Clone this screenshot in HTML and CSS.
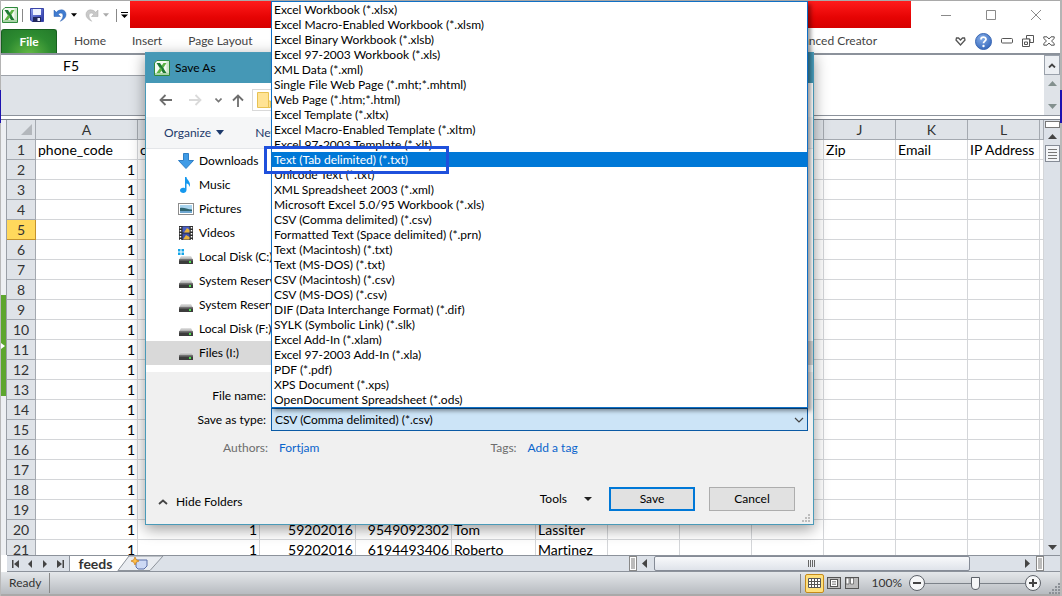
FILE: index.html
```html
<!DOCTYPE html>
<html lang="en">
<head>
<meta charset="utf-8">
<title>feeds - Save As</title>
<link rel="stylesheet" href="styles.css">
</head>
<body>
<svg width="0" height="0" class="defs" aria-hidden="true">
  <defs>
    <linearGradient id="drv" x1="0" y1="0" x2="0" y2="1"><stop offset="0" stop-color="#e6e6e6"/><stop offset="1" stop-color="#9a9a9a"/></linearGradient>
    <linearGradient id="dsk" x1="0" y1="0" x2="1" y2="1"><stop offset="0" stop-color="#8ea0f0"/><stop offset="1" stop-color="#2330a0"/></linearGradient>
    <radialGradient id="hlp" cx=".4" cy=".3" r=".8"><stop offset="0" stop-color="#86aee8"/><stop offset="1" stop-color="#2f62b8"/></radialGradient>
  </defs>
  <symbol id="excel" viewBox="0 0 16 16">
    <path d="M3 .5H15.500V15.500H.5V3Z" fill="#f4faf2" stroke="#2f8a3c"/>
    <path d="M12.500 1H15V15H12.500Z" fill="#cfe5cc"/><path d="M1 13H15V15H1Z" fill="#a9d4a6"/>
    <path d="M2.500 3H6L12.500 13H9Z" fill="#1f7a33"/><path d="M9.500 3H12.500L6 13H2.500Z" fill="#5db345"/><path d="M6 6.500 7.500 5.500 10 9.300 9 11Z" fill="#1f7a33"/>
  </symbol>
  <symbol id="drive" viewBox="0 0 16 14">
    <path d="M3 5H13L15 9H1Z" fill="url(#drv)"/><rect x="1" y="8.500" width="14" height="4.500" fill="#3c3c3c"/><rect x="1" y="8.500" width="14" height="1" fill="#777"/><rect x="11" y="10" width="2" height="2" fill="#4ee04e"/>
  </symbol>
  <symbol id="tri" viewBox="0 0 7 4"><path d="M0 0H7L3.500 4Z"/></symbol>
</svg>

<div class="app">
  <header class="titlebar">
    <div class="quick">
      <svg class="i16"><use href="#excel"/></svg>
      <span class="vsep"></span>
      <svg class="i14 disk" viewBox="0 0 14 14"><path d="M.5.5H13.500V13.500H2L.5 12Z" fill="url(#dsk)" stroke="#3a45a8"/><rect x="3" y="1" width="8" height="6" fill="#eef2ff"/><rect x="3" y="9" width="8" height="5" fill="#20265c"/><rect x="7.500" y="10" width="2.500" height="3" fill="#e8ecff"/></svg>
      <svg class="i14 undo" viewBox="0 0 14 14"><path d="M1 2V8.500H7.500L5.200 6.300C7.500 3.900 10.300 5.300 10 8 9.900 9.800 8.800 11.500 7.300 13.300 11 11.500 13 9.300 13 6.500 12.900 1.300 7 .3 3.300 4.300Z" fill="#3f7bd0" stroke="#2b5fae" stroke-width=".5"/></svg>
      <svg class="tri"><use href="#tri"/></svg>
      <svg class="i14 redo" viewBox="0 0 14 14"><path d="M13 2V8.500H6.500L8.800 6.300C6.500 3.900 3.700 5.300 4 8 4.100 9.800 5.200 11.500 6.700 13.300 3 11.500 1 9.300 1 6.500 1.100 1.300 7 .3 10.700 4.300Z" fill="#c9c9c9" stroke="#aaa" stroke-width=".5"/></svg>
      <svg class="tri pale"><use href="#tri"/></svg>
      <span class="vsep"></span>
      <svg class="custom" viewBox="0 0 7 6"><path d="M0 0H7V1H0ZM0 2.500H7L3.500 6Z"/></svg>
    </div>
    <div class="redact"></div>
    <div class="winbtns">
      <svg viewBox="0 0 12 12"><path d="M1 6.500H11"/></svg>
      <svg viewBox="0 0 12 12"><path d="M1.500 1.500H10.500V10.500H1.500Z"/></svg>
      <svg viewBox="0 0 12 12"><path d="M1 1 11 11M11 1 1 11"/></svg>
    </div>
  </header>

  <nav class="ribbon">
    <button class="file">File</button>
    <button class="tab">Home</button>
    <button class="tab">Insert</button>
    <button class="tab">Page Layout</button>
    <button class="tab addin">Advanced Creator</button>
    <div class="tools">
      <svg width="11" height="9" viewBox="0 0 11 9"><path d="M1.500 1H3.500L5.500 3 7.500 1H9.500L10 3 5.500 8 1 3Z" fill="#fff" stroke="#555" stroke-width="1.300"/></svg>
      <svg width="17" height="17" viewBox="0 0 17 17"><circle cx="8.500" cy="8.500" r="8" fill="url(#hlp)" stroke="#3c69b4"/><path d="M6 6.500C6 3.500 11 3.500 11 6.300 11 8 8.500 8.300 8.500 10.300" fill="none" stroke="#fff" stroke-width="1.800"/><circle cx="8.500" cy="13" r="1.200" fill="#fff"/></svg>
      <svg width="12" height="6" viewBox="0 0 12 6"><rect x=".5" y=".5" width="11" height="4.500" rx="1" fill="#fff" stroke="#555"/></svg>
      <svg width="12" height="12" viewBox="0 0 12 12"><path d="M4.500.5H11.500V7.500H8V4H4.500Z" fill="#fff" stroke="#555"/><path d="M.5 4H7.500V11.500H.5ZM2.500 7H5.500V9.500H2.500Z" fill="#fff" stroke="#555"/></svg>
      <svg width="12" height="10" viewBox="0 0 12 10"><path d="M.8.800H4L6 3 8 .8H11.200V2.500L8.500 5 11.200 7.500V9.200H8L6 7 4 9.200H.8V7.500L3.500 5 .8 2.500Z" fill="#fff" stroke="#555"/></svg>
    </div>
  </nav>

  <section class="formula">
    <div class="namecol"><input class="namebox" aria-label="Name box" value="F5"></div>
    <textarea class="fx" aria-label="Formula bar"></textarea>
    <div class="fxscroll">
      <button aria-label="Collapse formula bar"><svg width="8" height="5" viewBox="0 0 8 5"><path d="M1 4.500 4 1.500 7 4.500" fill="none" stroke="#444" stroke-width="1.800"/></svg></button>
      <svg width="9" height="5" viewBox="0 0 9 5"><path d="M0 5 4.500 0 9 5Z" fill="#83908e"/></svg>
      <svg width="9" height="5" viewBox="0 0 9 5"><path d="M0 0H9L4.500 5Z" fill="#83908e"/></svg>
    </div>
  </section>

  <main class="work">
    <div class="gutter"><div class="handle"><svg width="4" height="6" viewBox="0 0 4 6"><path d="M0 0 4 3 0 6Z" fill="#fff"/></svg></div></div>
    <div class="sheet">
      <table>
        <colgroup><col class="c-h"><col class="c-a"><col class="c-b"><col class="c-c"><col class="c-c"><col class="c-e"><col class="c-n"><col class="c-n"><col class="c-n"><col class="c-n"><col class="c-n"><col class="c-n"><col class="c-n"><col></colgroup>
        <thead><tr><th class="corner"><svg width="11" height="11" viewBox="0 0 11 11"><path d="M11 0V11H0Z" fill="#b3b7bc"/></svg></th><th>A<th>B<th>C<th>D<th>E<th>F<th>G<th>H<th>I<th>J<th>K<th>L<th></tr></thead>
        <tbody>
        <tr><th>1<td class="t">phone_code<td class="t">country<td><td><td><td><td><td><td><td class="t">Zip<td class="t">Email<td class="t">IP Address<td>
        <tr><th>2<td>1<td><td><td><td><td><td><td><td><td><td><td><td>
        <tr><th>3<td>1<td><td><td><td><td><td><td><td><td><td><td><td>
        <tr><th>4<td>1<td><td><td><td><td><td><td><td><td><td><td><td>
        <tr><th class="on">5<td>1<td><td><td><td><td><td><td><td><td><td><td><td>
        <tr><th>6<td>1<td><td><td><td><td><td><td><td><td><td><td><td>
        <tr><th>7<td>1<td><td><td><td><td><td><td><td><td><td><td><td>
        <tr><th>8<td>1<td><td><td><td><td><td><td><td><td><td><td><td>
        <tr><th>9<td>1<td><td><td><td><td><td><td><td><td><td><td><td>
        <tr><th>10<td>1<td><td><td><td><td><td><td><td><td><td><td><td>
        <tr><th>11<td>1<td><td><td><td><td><td><td><td><td><td><td><td>
        <tr><th>12<td>1<td><td><td><td><td><td><td><td><td><td><td><td>
        <tr><th>13<td>1<td><td><td><td><td><td><td><td><td><td><td><td>
        <tr><th>14<td>1<td><td><td><td><td><td><td><td><td><td><td><td>
        <tr><th>15<td>1<td><td><td><td><td><td><td><td><td><td><td><td>
        <tr><th>16<td>1<td><td><td><td><td><td><td><td><td><td><td><td>
        <tr><th>17<td>1<td><td><td><td><td><td><td><td><td><td><td><td>
        <tr><th>18<td>1<td><td><td><td><td><td><td><td><td><td><td><td>
        <tr><th>19<td>1<td><td><td><td><td><td><td><td><td><td><td><td>
        <tr><th>20<td>1<td>1<td>59202016<td>9549092302<td class="t">Tom<td class="t">Lassiter<td><td><td><td><td><td><td>
        <tr><th>21<td>1<td>1<td>59202016<td>6194493406<td class="t">Roberto<td class="t">Martinez<td><td><td><td><td><td><td>
        </tbody>
      </table>
    </div>
    <div class="vscroll">
      <div class="split"></div>
      <svg width="9" height="5" viewBox="0 0 9 5"><path d="M0 5 4.500 0 9 5Z" fill="#444"/></svg>
      <div class="thumb"><svg width="9" height="10" viewBox="0 0 9 10"><path d="M0 .5H9M0 3.500H9M0 6.500H9M0 9.500H9" stroke="#777"/></svg></div>
      <svg class="down" width="9" height="5" viewBox="0 0 9 5"><path d="M0 0H9L4.500 5Z" fill="#444"/></svg>
    </div>
  </main>

  <div class="tabbar">
    <div class="tabnav">
      <svg width="7" height="8" viewBox="0 0 7 8"><path d="M0 0H1.500V8H0ZM7 0V8L2 4Z"/></svg>
      <svg width="7" height="8" viewBox="0 0 7 8"><path d="M5 0V8L1 4Z"/></svg>
      <svg width="7" height="8" viewBox="0 0 7 8"><path d="M1 0V8L5 4Z"/></svg>
      <svg width="7" height="8" viewBox="0 0 7 8"><path d="M0 0V8L5 4ZM5.500 0H7V8H5.500Z"/></svg>
    </div>
    <button class="sheettab">feeds</button>
    <svg class="newtab" width="48" height="15" viewBox="0 0 48 15">
      <path d="M0 0H12L1 14.500H0Z" fill="#fff"/><path d="M12 0 1 14.500H33L46 0Z" fill="#e9ecf1" stroke="#8d939b"/>
      <path d="M19 4H30V10L27 13H21L19 11Z" fill="#cdd9f5" stroke="#5b6fa8"/>
      <path d="M18 1 19.200 3.800 22 5 19.200 6.200 18 9 16.800 6.200 14 5 16.800 3.800Z" fill="#ffc04a" stroke="#c77a12" stroke-width=".7"/>
    </svg>
    <span class="grow"></span>
    <div class="hscroll">
      <div class="hsplit"></div>
      <svg width="5" height="9" viewBox="0 0 5 9"><path d="M5 0V9L0 4.500Z" fill="#444"/></svg>
      <div class="hthumb"><svg width="8" height="7" viewBox="0 0 8 7"><path d="M.5 0V7M2.500 0V7M4.500 0V7M6.500 0V7" stroke="#666"/></svg></div>
      <svg class="right" width="5" height="9" viewBox="0 0 5 9"><path d="M0 0V9L5 4.500Z" fill="#444"/></svg>
      <div class="hsplit"></div>
    </div>
  </div>

  <footer class="status">
    <span class="ready">Ready</span>
    <span class="grow"></span>
    <div class="views">
      <button class="view sel" aria-label="Normal"><svg width="13" height="10" viewBox="0 0 13 10"><rect width="13" height="10" fill="#fff"/><path d="M.5.500H12.500V9.500H.5ZM.5 3.500H12.500M.5 6.500H12.500M3.500.5V9.500M6.500.5V9.500M9.500.5V9.500" fill="none" stroke="#555"/></svg></button>
      <button class="view" aria-label="Page layout"><svg width="14" height="12" viewBox="0 0 14 12"><rect x=".5" y=".5" width="13" height="11" fill="#bbb" stroke="#555"/><rect x="3.500" y="2.500" width="7" height="7" fill="#fff" stroke="#555"/><path d="M5 4.500H9M5 6H9M5 7.500H9" stroke="#777" stroke-width=".7"/></svg></button>
      <button class="view" aria-label="Page break"><svg width="14" height="12" viewBox="0 0 14 12"><rect x=".5" y=".5" width="13" height="11" fill="#bbb" stroke="#555"/><path d="M1 1H4V7H1ZM5.500 1H8.500V7H5.500Z" fill="#fff" stroke="#555" stroke-width=".7"/></svg></button>
    </div>
    <label class="pct" for="zoom">100%</label>
    <button class="round" aria-label="Zoom out"><svg width="16" height="16" viewBox="0 0 16 16"><circle cx="8" cy="8" r="7.500" fill="#f6f7f8" stroke="#5c6168"/><path d="M4 8H12" stroke="#444" stroke-width="2"/></svg></button>
    <input id="zoom" class="zoom" type="range" min="0" max="100" value="50">
    <button class="round" aria-label="Zoom in"><svg width="16" height="16" viewBox="0 0 16 16"><circle cx="8" cy="8" r="7.500" fill="#f6f7f8" stroke="#5c6168"/><path d="M4 8H12M8 4V12" stroke="#444" stroke-width="2"/></svg></button>
    <svg class="grip" width="11" height="11" viewBox="0 0 11 11"><path d="M9 0h2v2H9zM6 3h2v2H6zM9 3h2v2H9zM3 6h2v2H3zM6 6h2v2H6zM9 6h2v2H9zM0 9h2v2H0zM3 9h2v2H3zM6 9h2v2H6zM9 9h2v2H9z" fill="#8c9197"/></svg>
  </footer>
</div>

<div class="dialog" role="dialog" aria-labelledby="dlg">
  <div class="dtitle"><svg class="i16"><use href="#excel"/></svg><span id="dlg">Save As</span></div>
  <div class="dnav">
    <svg width="13" height="12" viewBox="0 0 13 12"><path d="M13 6H2M6.500 1 1.500 6 6.500 11" fill="none" stroke="#6e6e6e" stroke-width="1.800"/></svg>
    <svg width="13" height="12" viewBox="0 0 13 12"><path d="M0 6H11M6.500 1 11.500 6 6.500 11" fill="none" stroke="#dadada" stroke-width="1.800"/></svg>
    <svg width="7" height="5" viewBox="0 0 7 5"><path d="M.5.500 3.500 3.500 6.500.5" fill="none" stroke="#777" stroke-width="1.600"/></svg>
    <svg width="12" height="13" viewBox="0 0 12 13"><path d="M6 13V2M1 6.500 6 1.500 11 6.500" fill="none" stroke="#6e6e6e" stroke-width="1.800"/></svg>
    <div class="address"><svg width="14" height="16" viewBox="0 0 14 16"><path d="M.5.500H11.500V9H13.500V15.500H.5Z" fill="#ffe394" stroke="#e8c252"/><path d="M11.500 9V15.500" stroke="#e8c252"/></svg></div>
  </div>
  <div class="dtools"><button class="organize">Organize <svg width="8" height="5" viewBox="0 0 8 5"><path d="M0 0H8L4 5Z" fill="#1d3a6b"/></svg></button><button>New folder</button></div>
  <div class="places">
    <ul>
      <li><svg viewBox="0 0 16 16"><path d="M5.500.5H10.500V7.500H15.500L8 15.500.5 7.500H5.500Z" fill="#3f9be6" stroke="#2f7fc6"/></svg>Downloads</li>
      <li><svg viewBox="0 0 16 16"><path d="M7 0H8.500C8.500 3 13.500 4.500 11.500 10 11 7.500 10 6.500 8.500 6.500V13C8.500 17 2 16.500 2 13.500 2 11 5 10.300 7 11.300Z" fill="#1598ee"/></svg>Music</li>
      <li><svg viewBox="0 0 16 16"><rect x=".5" y="2.500" width="15" height="11" fill="#fff" stroke="#8c8c8c"/><rect x="2" y="4" width="12" height="8" fill="#a9d4ef"/><path d="M2 7C6 6 9 8.500 14 8.500V12H2Z" fill="#2f6470"/><path d="M2 10H14V12H2Z" fill="#6ea6cf"/></svg>Pictures</li>
      <li><svg viewBox="0 0 16 16"><rect x="1" y="1" width="14" height="14" fill="#2d2d2d"/><path d="M4.500 1.500H11.500V7.500H4.500Z" fill="#4a5fc4"/><path d="M4.500 8.500H11.500V14.500H4.500Z" fill="#3b4fae"/><path d="M6 7.500 9 3 11.500 5V7.500ZM5 14.500 8 10 11.500 12V14.500Z" fill="#e8b33a"/><path d="M2.500 2V15M13.500 2V15" stroke="#fff" stroke-width="1.500" stroke-dasharray="1.500 1.500"/></svg>Videos</li>
      <li><svg viewBox="0 0 16 16"><path d="M0 0H2.500V2.500H0ZM3.500 0H6V2.500H3.500ZM0 3.500H2.500V6H0ZM3.500 3.500H6V6H3.500Z" fill="#15a5e8"/><use href="#drive" y="2" width="16" height="14"/></svg>Local Disk (C:)</li>
      <li><svg viewBox="0 0 16 16"><use href="#drive" y="2" width="16" height="14"/></svg>System Reserved</li>
      <li><svg viewBox="0 0 16 16"><use href="#drive" y="2" width="16" height="14"/></svg>System Reserved</li>
      <li><svg viewBox="0 0 16 16"><use href="#drive" y="2" width="16" height="14"/></svg>Local Disk (F:)</li>
      <li class="cur"><svg viewBox="0 0 16 16"><use href="#drive" y="2" width="16" height="14"/></svg>Files (I:)</li>
    </ul>
  </div>
  <form class="dform">
    <div class="fields">
      <label for="fname">File name:</label>
      <input id="fname">
      <label for="ftype">Save as type:</label>
      <div class="combo">
        <select id="ftype"><option>CSV (Comma delimited) (*.csv)</option></select>
        <svg class="chev" width="10" height="6" viewBox="0 0 10 6"><path d="M1 1 5 5 9 1" fill="none" stroke="#444" stroke-width="1.200"/></svg>
        <ul class="list" role="listbox" aria-label="File types">
          <li>Excel Workbook (*.xlsx)</li>
          <li>Excel Macro-Enabled Workbook (*.xlsm)</li>
          <li>Excel Binary Workbook (*.xlsb)</li>
          <li>Excel 97-2003 Workbook (*.xls)</li>
          <li>XML Data (*.xml)</li>
          <li>Single File Web Page (*.mht;*.mhtml)</li>
          <li>Web Page (*.htm;*.html)</li>
          <li>Excel Template (*.xltx)</li>
          <li>Excel Macro-Enabled Template (*.xltm)</li>
          <li>Excel 97-2003 Template (*.xlt)</li>
          <li class="sel">Text (Tab delimited) (*.txt)<span class="mark"></span></li>
          <li>Unicode Text (*.txt)</li>
          <li>XML Spreadsheet 2003 (*.xml)</li>
          <li>Microsoft Excel 5.0/95 Workbook (*.xls)</li>
          <li>CSV (Comma delimited) (*.csv)</li>
          <li>Formatted Text (Space delimited) (*.prn)</li>
          <li>Text (Macintosh) (*.txt)</li>
          <li>Text (MS-DOS) (*.txt)</li>
          <li>CSV (Macintosh) (*.csv)</li>
          <li>CSV (MS-DOS) (*.csv)</li>
          <li>DIF (Data Interchange Format) (*.dif)</li>
          <li>SYLK (Symbolic Link) (*.slk)</li>
          <li>Excel Add-In (*.xlam)</li>
          <li>Excel 97-2003 Add-In (*.xla)</li>
          <li>PDF (*.pdf)</li>
          <li>XPS Document (*.xps)</li>
          <li>OpenDocument Spreadsheet (*.ods)</li>
        </ul>
      </div>
    </div>
    <div class="meta"><span class="mlabel authors">Authors:</span><a href="#">Fortjam</a><span class="mlabel tags">Tags:</span><a href="#">Add a tag</a></div>
    <div class="actions">
      <button type="button" class="plain hide"><svg width="10" height="6" viewBox="0 0 10 6"><path d="M1 5 5 1.500 9 5" fill="none" stroke="#444" stroke-width="1.800"/></svg>Hide Folders</button>
      <span class="grow"></span>
      <button type="button" class="plain toolsbtn">Tools<svg width="8" height="4" viewBox="0 0 8 4"><path d="M0 0H8L4 4Z" fill="#222"/></svg></button>
      <button type="button" class="btn primary">Save</button>
      <button type="button" class="btn">Cancel</button>
    </div>
    <svg class="dgrip" width="8" height="8" viewBox="0 0 8 8"><path d="M6 0h2v2H6zM3 3h2v2H3zM6 3h2v2H6zM0 6h2v2H0zM3 6h2v2H3zM6 6h2v2H6z" fill="#bdbdbd"/></svg>
  </form>
</div>
</body>
</html>
```
FILE: styles.css
```css
* { box-sizing: border-box; }
html, body { height: 100%; }
body {
  margin: 0;
  position: relative;
  overflow: hidden;
  background: linear-gradient(#b4b4b4 90px, #1d12b0 90px, #1d12b0 123px, #b9b9b9 123px);
  font: 12px/16px Lato, "Noto Sans", sans-serif;
  font-variant-ligatures: none;
  color: #000;
}
button, input, select, textarea { font: inherit; font-variant-ligatures: none; color: inherit; border: 0; padding: 0; margin: 0; background: none; border-radius: 0; }
ul { list-style: none; margin: 0; padding: 0; }
svg { display: block; flex: none; }
.defs { position: absolute; }
.grow { flex: 1; }
.i16 { width: 16px; height: 16px; }
.i14 { width: 14px; height: 14px; }

.app {
  display: flex;
  flex-direction: column;
  height: 100%;
  border: solid #a9a9a9;
  border-width: 1px 0 2px;
  margin: 0 2px 0 1px;
  background: #fff;
}

.titlebar { display: flex; height: 28px; flex: none; align-items: stretch; }
.quick { display: flex; align-items: center; width: 129px; padding-left: 1px; }
.vsep { width: 1px; height: 13px; margin-left: 4px; background: #888; }
.disk { margin-left: 7px; }
.undo { margin-left: 9px; }
.tri { width: 6px; height: 4px; margin-left: 4px; }
.redo { margin-left: 8px; }
.pale { fill: #aaa; }
.quick .pale + .vsep { margin-left: 7px; }
.custom { width: 7px; height: 6px; margin-left: 4px; }
.redact { flex: 1; margin-bottom: 1px; background: linear-gradient(#ff1c1c, #e60404 60%, #d60000); }
.winbtns { display: flex; align-items: center; gap: 33px; width: 149px; padding-left: 29px; }
.winbtns svg { width: 12px; height: 12px; fill: none; stroke: #8a8a8a; }

.ribbon { display: flex; height: 26px; flex: none; border-bottom: 2px solid #8c929b; color: #444; }
.file {
  width: 56px;
  color: #fff;
  font-weight: bold;
  border: 1px solid #17601f;
  border-bottom: 0;
  border-radius: 3px 3px 0 0;
  background: radial-gradient(ellipse at 50% 110%, #66bb46, #2c8a30 60%, #237a2a);
}
.tab { margin-left: 26px; }
.file + .tab { margin-left: 17px; }
.addin { margin-left: auto; margin-right: 78px; }
.tools { display: flex; align-items: center; gap: 9px; padding-right: 5px; }

.formula { display: flex; height: 61px; flex: none; border-bottom: 1px solid #8c929b; background: #dfe3e8; }
.namecol { width: 252px; }
.namebox { display: block; width: 100%; height: 21px; padding: 0 112px 0 0; text-align: center; background: #fff; font-size: 14px; border-bottom: 1px solid #9ea3aa; }
.fx { flex: 1; resize: none; background: #fff; }
.fxscroll { width: 16px; display: flex; flex-direction: column; align-items: center; }
.fxscroll button { width: 16px; height: 20px; border: 1px solid #9aa1ab; background: #eceff3; display: grid; place-items: center; margin-bottom: 6px; }
.fxscroll svg + svg { margin-top: 18px; }

.work { display: flex; flex: 1; min-height: 0; margin-top: 3px; border-top: 1px solid #7d838d; }
.gutter { width: 6px; border-right: 1px solid #9a9fa6; background: #eef0f3; padding-top: 175px; }
.handle { height: 101px; background: #5da62e; display: flex; align-items: center; }
.sheet { flex: 1; min-width: 0; overflow: hidden; }
table { width: 100%; table-layout: fixed; border-collapse: separate; border-spacing: 0; font-size: 14px; line-height: 19px; }
.c-h { width: 29px; } .c-a { width: 102px; } .c-b { width: 122px; } .c-c { width: 96px; } .c-e { width: 84px; } .c-n { width: 72px; }
th, td { height: 20px; padding: 0 2px; border: solid #d4d6d9; border-width: 0 1px 1px 0; white-space: nowrap; text-align: right; }
th { background: #dfe3e8; border-color: #a4a9b0; font-weight: normal; text-align: center; color: #333; padding: 0; }
td.t { text-align: left; }
.corner svg { margin-left: 14px; }
th.on { background: #ffd85c; border-color: #c4922c; }

.vscroll { width: 16px; display: flex; flex-direction: column; align-items: center; background: #dce1e8; padding: 1px 0 5px; }
.split { width: 15px; height: 7px; border: 1px solid #777; background: #fff; margin-bottom: 6px; }
.thumb { width: 15px; height: 17px; margin-top: 6px; border: 1px solid #858b96; background: #f3f5f8; display: grid; place-items: center; }
.down { margin-top: auto; }

.tabbar { display: flex; height: 17px; flex: none; border: solid #8c929b; border-width: 1px 0; margin-left: 6px; background: #dce1e8; }
.tabnav { display: flex; align-items: center; gap: 8px; width: 63px; padding-left: 5px; border-right: 1px solid #8c929b; fill: #444; }
.sheettab { width: 47px; padding-left: 4px; background: #fff; color: #333; font-size: 14px; font-weight: bold; line-height: 15px; }
.hscroll { display: flex; align-items: center; width: 415px; margin-right: 16px; }
.hsplit { width: 8px; height: 15px; border: 2px solid #fff; outline: 1px solid #888; outline-offset: -1px; background: #bbb; }
.hsplit + svg { margin: 0 7px 0 5px; }
.hthumb { width: 316px; height: 15px; border: 1px solid #858b96; border-radius: 2px; background: linear-gradient(#f8f9fb, #dfe3ea); display: grid; place-items: center; }
.right { margin-left: auto; margin-right: 6px; }

.status { display: flex; align-items: center; height: 22px; flex: none; background: linear-gradient(#e4e7ea, #b7bbc0); color: #333; }
.ready { padding: 0 8px; line-height: 20px; border-right: 1px solid #888; }
.views { display: flex; gap: 2px; border-left: 1px solid #888; padding-left: 4px; align-items: center; }
.view { width: 16px; height: 18px; display: grid; place-items: center; }
.view.sel { width: 19px; height: 19px; border: 1px solid #c58a1b; border-radius: 2px; background: #ffe07c; }
.pct { margin: 0 7px 0 12px; }
.zoom { appearance: none; width: 100px; height: 14px; background: linear-gradient(#7c8289, #7c8289) center / 100% 1px no-repeat; }
.zoom::-webkit-slider-thumb { appearance: none; width: 9px; height: 13px; background: #f5f6f7; border: 1px solid #5c6168; border-radius: 1px 1px 5px 5px; }
.grip { margin-left: 8px; align-self: flex-end; }

.dialog {
  position: absolute;
  left: 145px;
  top: 52px;
  width: 669px;
  display: flex;
  flex-direction: column;
  border: 1px solid #4a9ab8;
  background: #fff;
  box-shadow: 0 4px 14px rgba(0, 0, 0, .4);
}
.dtitle { display: flex; align-items: center; gap: 5px; height: 30px; padding-left: 8px; background: #4598b6; }
.dnav { display: flex; align-items: center; height: 34px; padding-left: 13px; }
.dnav svg + svg { margin-left: 17px; }
.dnav svg:nth-child(3) { margin-left: 13px; }
.dnav svg:nth-child(4) { margin-left: 10px; }
.address { flex: 1; margin: 0 14px 0 8px; height: 22px; border: 1px solid #d9d9d9; padding: 2px 4px; }
.dtools { display: flex; gap: 31px; height: 32px; padding-left: 18px; border-bottom: 1px solid #e4e6e9; background: #f5f6f7; color: #1d3a6b; }
.organize { display: flex; align-items: center; gap: 5px; }
.places { height: 223px; }
.places li { display: flex; align-items: center; gap: 5px; height: 24px; padding-left: 32px; }
.places li svg { width: 16px; height: 16px; }
.places .cur { background: #d9d9d9; }

.dform { position: relative; background: #f0f0f0; padding: 13px 5px 13px 0; }
.fields { display: grid; grid-template-columns: 120px 1fr; column-gap: 5px; row-gap: 1px; align-items: center; }
.fields label { text-align: right; }
#fname { height: 22px; border: 1px solid #999; background: #fff; padding: 0 4px; }
.combo { position: relative; height: 23px; }
#ftype { display: block; appearance: none; width: 100%; height: 23px; padding: 0 3px; border: 1px solid #0a5aa5; background: #cce4f7; }
.chev { position: absolute; right: 4px; top: 9px; }
.list { position: absolute; left: 0; right: 0; bottom: 100%; border: 1px solid #0f6fc5; background: #fff; box-shadow: 3px 3px 4px rgba(0, 0, 0, .4); }
.list li { height: 15px; line-height: 15px; padding-left: 2px; position: relative; white-space: nowrap; }
.list .sel { background: #0078d7; color: #fff; }
.mark { position: absolute; z-index: 1; left: -8px; top: -6px; width: 185px; height: 28px; border: 3px solid #1f50dc; }
.meta { display: flex; height: 16px; margin-top: 9px; color: #6d6d6d; }
.mlabel { text-align: right; margin-right: 11px; }
.authors { width: 122px; }
.meta .tags { margin-left: 171px; }
.meta a { color: #0a64cc; text-decoration: none; }
.actions { display: flex; align-items: center; margin-top: 31px; padding: 0 13px 0 12px; }
.plain { display: flex; align-items: center; gap: 8px; }
.hide { padding-top: 6px; }
.toolsbtn { gap: 17px; margin-right: 17px; }
.btn { width: 86px; height: 24px; border: 1px solid #adadad; background: #e1e1e1; }
.btn.primary { border: 2px solid #0078d7; margin-right: 14px; }
.dgrip { position: absolute; right: 3px; bottom: 2px; }
```
